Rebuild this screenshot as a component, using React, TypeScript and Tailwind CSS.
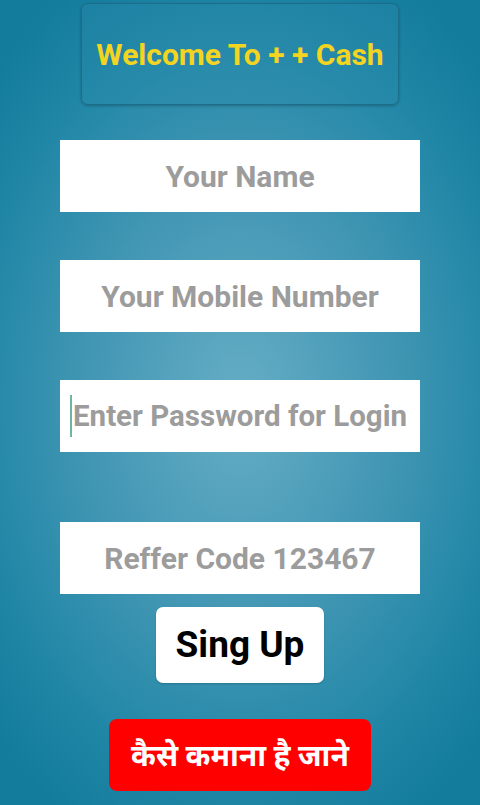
import React from 'react';

const fields = [
  { label: 'Your Name', mt: 'mt-[35px]', align: 'center' },
  { label: 'Your Mobile Number', mt: 'mt-[48px]', align: 'center' },
  { label: 'Enter Password for Login', mt: 'mt-[48px]', align: 'left' },
  { label: 'Reffer Code 123467', mt: 'mt-[70px]', align: 'center' },
];

const Field: React.FC<{ label: string; mt: string; align: string }> = ({ label, mt, align }) => (
  <div
    className={`${mt} w-[360px] h-[72px] bg-white flex items-center ${
      align === 'left' ? 'justify-start pl-[10px]' : 'justify-center'
    }`}
  >
    {align === 'left' && <span className="w-[2px] h-[42px] bg-[#6fb3a4] mr-[1px]" />}
    <span
      className={`${align === 'left' ? 'text-[29.5px]' : 'text-[30px]'} font-bold text-[#9c9c9c] whitespace-nowrap`}
    >
      {label}
    </span>
  </div>
);

export default function App() {
  return (
    <div
      className="w-[480px] h-[805px] overflow-hidden flex flex-col items-center bg-[radial-gradient(ellipse_70%_60%_at_50%_50%,#66adc5_0%,#4297b4_45%,#2086a6_80%,#137b9c_100%)]"
      style={{ fontFamily: 'Roboto, "Noto Sans", "DejaVu Sans", sans-serif' }}
    >
      <div className="mt-[3px] w-[318px] h-[102px] rounded-[7px] border border-[#1b6d89] bg-[#2a8aab]/30 shadow-[0_1px_3px_rgba(0,0,0,0.25)] flex items-center justify-center">
        <span className="text-[30px] font-bold text-[#f3d421] whitespace-nowrap">Welcome To + + Cash</span>
      </div>

      {fields.map((f) => (
        <Field key={f.label} label={f.label} mt={f.mt} align={f.align} />
      ))}

      <button className="mt-[13px] w-[168px] h-[76px] bg-white rounded-[7px] flex items-center justify-center shadow-[0_1px_2px_rgba(0,0,0,0.2)]">
        <span className="text-[37px] font-bold text-black">Sing Up</span>
      </button>

      <button className="mt-[36px] w-[262px] h-[72px] bg-[#ff0000] rounded-[8px] flex items-center justify-center">
        <span className="text-[30px] font-bold text-white">कैसे कमाना है जाने</span>
      </button>
    </div>
  );
}
